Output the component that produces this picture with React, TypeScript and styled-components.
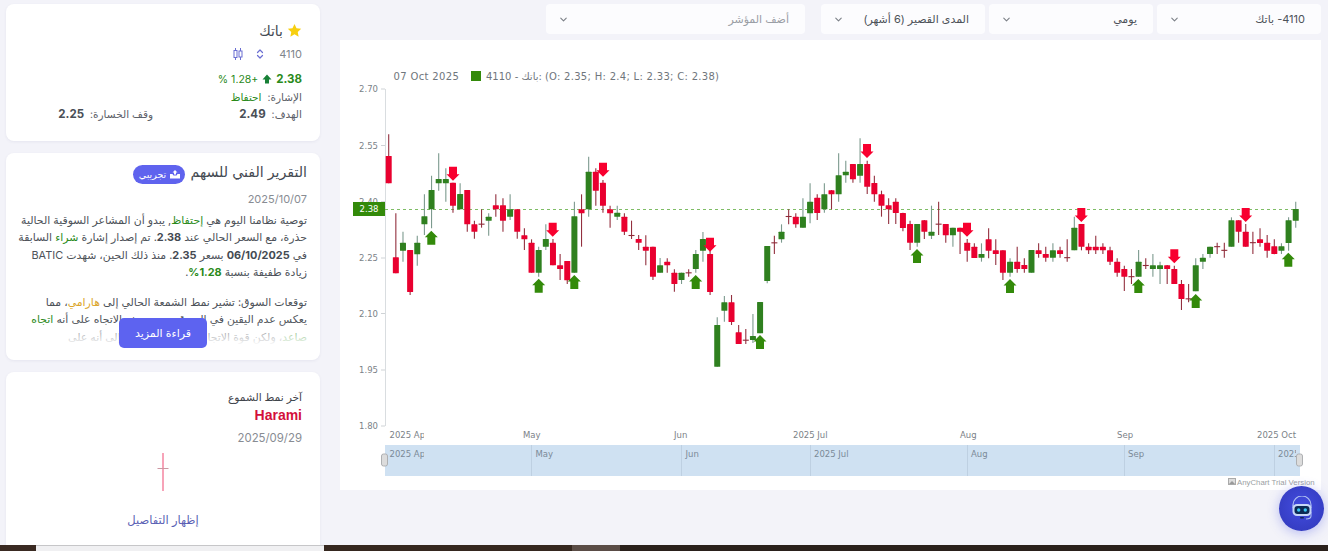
import React from 'react';
import styled, { createGlobalStyle } from 'styled-components';
import { ChevronDown, ChevronsUpDown } from 'lucide-react';

const FONT = `"Inter", "DejaVu Sans", "Noto Sans", sans-serif`;
const CHART_FONT = `"DejaVu Sans", "Liberation Sans", sans-serif`;

const Global = createGlobalStyle`
  html, body { margin: 0; padding: 0; background: #f3f3f9; overflow: hidden; }
  body { font-family: ${FONT}; }
`;

const Page = styled.div`
  position: relative;
  width: 1328px;
  height: 551px;
  display: flex;
  flex-direction: column;
  overflow: hidden;
  background: #f3f3f9;
`;
const Body = styled.div`
  flex: 1;
  min-height: 0;
  display: flex;
  gap: 20px;
  padding: 4px 7px 0 6px;
  overflow: hidden;
`;
const Sidebar = styled.aside`
  width: 314px;
  flex: none;
  display: flex;
  flex-direction: column;
  gap: 12px;
  direction: rtl;
`;
const Card = styled.section`
  position: relative;
  background: #fff;
  border-radius: 8px;
  box-shadow: 0 1px 3px rgba(60, 60, 110, 0.07);
  flex: none;
`;
const StockCard = styled(Card)`
  height: 137px;
  padding: 18px 18px 0;
  box-sizing: border-box;
`;
const Name = styled.div`
  display: flex;
  align-items: center;
  gap: 4px;
  height: 16px;
  font-size: 14px;
  color: #444a52;
`;
const CodeRow = styled.div`
  display: flex;
  align-items: center;
  margin-top: 9px;
  height: 14px;
  font-size: 11px;
  color: #80858c;
`;
const IconGap = styled.span<{ $w: number }>`
  display: inline-flex;
  margin-inline-start: ${p => p.$w}px;
  color: #6a6ed2;
`;
const PriceRow = styled.div`
  display: flex;
  align-items: center;
  gap: 4px;
  margin-top: 11px;
  margin-bottom: 4px;
  height: 14px;
  font-size: 11.5px;
  color: #2a8a1a;
`;
const Percent = styled.span`
  font-size: 10.5px;
  margin-inline-start: -2px;
`;
const Strong = styled.b`
  font-weight: 700;
`;
const InfoRow = styled.div`
  display: flex;
  align-items: center;
  margin-top: 3px;
  height: 14px;
  font-size: 10.5px;
  color: #5b6068;
`;
const InfoCol = styled.div`
  width: 149px;
  flex: none;
  display: flex;
  align-items: center;
  gap: 6px;
`;
const Value = styled.b`
  color: #4a4f57;
  font-weight: 700;
  font-size: 11.5px;
`;
const Good = styled.span`
  color: #2a8a1a;
`;
const Warn = styled.span`
  color: #dba52a;
`;
const Dark = styled.b`
  color: #444a52;
  font-weight: 700;
`;
const ReportCard = styled(Card)`
  height: 207px;
  padding: 11px 13px 0 12px;
  box-sizing: border-box;
  overflow: hidden;
`;
const ReportHead = styled.div`
  display: flex;
  align-items: center;
  gap: 5px;
  height: 20px;
`;
const ReportTitle = styled.div`
  font-size: 14.2px;
  color: #444a52;
  padding-bottom: 5px;
`;
const Badge = styled.span`
  display: inline-flex;
  align-items: center;
  justify-content: center;
  gap: 4px;
  width: 52px;
  height: 19px;
  border-radius: 10px;
  background: #5f63ee;
  color: #fff;
  font-size: 9.5px;
`;
const DateText = styled.div`
  font-size: 11px;
  color: #888c93;
  margin-top: 8px;
  height: 14px;
  line-height: 14px;
`;
const Article = styled.div`
  position: relative;
  margin-top: 6px;
  height: 133px;
  overflow: hidden;
  font-size: 10.9px;
  line-height: 17.3px;
  white-space: nowrap;
  color: #4d5259;
`;
const Para = styled.p`
  margin: 0 0 13px;
`;
const Fade = styled.div`
  position: absolute;
  left: 0;
  right: 0;
  bottom: 0;
  height: 24px;
  background: linear-gradient(to bottom, rgba(255, 255, 255, 0), rgba(255, 255, 255, 0.58) 55%, #fff);
`;
const ReadMore = styled.button`
  position: absolute;
  left: 50%;
  bottom: 12px;
  transform: translateX(-50%);
  width: 88px;
  height: 30px;
  border: none;
  border-radius: 5px;
  background: #5d63f0;
  color: #fff;
  font: 11px ${FONT};
`;
const PatternCard = styled(Card)`
  flex: 1;
  border-radius: 8px 8px 0 0;
  padding: 18px 18px 0;
  box-sizing: border-box;
  display: flex;
  flex-direction: column;
`;
const PatternLabel = styled.div`
  font-size: 10.6px;
  color: #3f444b;
  height: 16px;
  line-height: 16px;
`;
const PatternName = styled.div`
  font-size: 14px;
  font-weight: 700;
  color: #d30f3b;
  line-height: 18px;
  font-family: "Liberation Sans", sans-serif;
`;
const PatternDate = styled(DateText)`
  margin-top: 7px;
  font-size: 11.4px;
`;
const PatternPic = styled.div`
  display: flex;
  justify-content: center;
  margin-top: 8px;
`;
const ShowDetails = styled.div`
  text-align: center;
  font-size: 11.5px;
  color: #5a5fb4;
  margin-top: 22px;
`;
const Main = styled.main`
  width: 981px;
  flex: none;
  display: flex;
  flex-direction: column;
  gap: 6px;
`;
const Toolbar = styled.div`
  display: flex;
  direction: rtl;
  gap: 4px;
  height: 30px;
`;
const Select = styled.div<{ $w: number; $gap?: number }>`
  width: ${p => p.$w}px;
  margin-inline-start: ${p => p.$gap ?? 0}px;
  height: 30px;
  box-sizing: border-box;
  display: flex;
  align-items: center;
  justify-content: space-between;
  padding: 0 16px 0 12px;
  background: #fcfcfe;
  border-radius: 4px;
  font-size: 11px;
  color: #4d5259;
  svg { color: #7c8087; flex: none; }
`;
const Placeholder = styled.span`
  color: #9a9ea5;
`;
const ChartPanel = styled.div`
  width: 981px;
  height: 450px;
  background: #fff;
`;
const Bot = styled.div`
  position: absolute;
  left: 1279px;
  top: 486px;
  width: 45px;
  height: 45px;
  border-radius: 50%;
  background: radial-gradient(circle at 50% 45%, #434ce0, #3038b8);
  box-shadow: 0 2px 12px rgba(70, 80, 230, 0.35);
  display: flex;
  align-items: center;
  justify-content: center;
`;
const Strip = styled.div`
  height: 6px;
  flex: none;
  display: flex;
  background: #2a201b;
`;
const StripPart = styled.div<{ $w: number; $c: string; $line?: boolean }>`
  width: ${p => p.$w}px;
  background: ${p => p.$c};
  box-sizing: border-box;
  ${p => (p.$line ? 'border-top: 1px solid #c6c6c8;' : '')}
`;

const X0 = 388.7;
const STEP = 7.142;
type C = [number, number, number, number];

const y6 = (b: number, rows: C[]) => rows.map(r => r.map(v => b + v / 3) as C);

const seriesA: C[] = y6(120, [
  [43,108,190,190],[280,412,460,460],[335,368,392,425],[390,390,516,525],[347,368,403,437],
  [223,289,313,345],[167,210,268,325],[100,177,190,212],[145,177,190,245],[188,188,257,278],
  [190,222,268,268],[210,210,313,335],[302,313,335,356],[268,311,314,323],[280,290,302,347],
  [223,256,268,290],[235,256,302,335],[223,268,290,300],[268,268,335,356],[325,346,358,390],
  [358,368,458,458],[380,390,458,470],[313,357,380,390],[357,368,436,436],[402,436,447,480],
  [423,423,481,492],[245,289,458,458],[223,268,280,380],[110,155,268,290],[145,155,212,257],
  [180,188,257,278],[257,268,280,323],[257,278,290,300],[280,290,335,345],[302,345,348,357],
  [345,357,368,390],[346,380,392,436],[380,380,470,480],[414,436,458,458],[415,425,436,458],
  [448,458,492,515],[458,458,480,492],[448,457,460,470],[390,402,447,458],[336,357,392,425],
  [390,402,516,525],
]);
const seriesB: C[] = [
  [317.3,325,366.7,366.7],[296,302.3,310.7,321.7],[295,302.3,322,325],[325,332.3,344,344],
  [329,339.7,340.7,344],[314,336,340,343],[302,302,333.3,333.3],
];
const seriesC: C[] = y6(120, [
  [378,378,483,490],[347,367,370,402],[313,335,358,368],[268,288,291,313],[280,290,313,323],
  [235,290,323,323],[190,245,280,310],[223,233,279,300],[190,223,268,278],[210,211,223,268],
  [100,166,223,245],[122,155,166,188],[132,132,178,188],[55,132,167,188],[122,132,200,222],
  [167,189,223,245],[212,223,257,290],[235,256,268,312],[235,245,279,312],[278,279,324,334],
  [302,312,368,390],[312,312,368,380],[300,301,335,357],[257,335,347,357],[245,311,314,345],
  [312,312,346,368],[323,323,346,380],[323,323,335,402],[357,368,392,425],[370,380,414,414],
]);
const seriesD: C[] = y6(180, [
  [190,222,233,245],[145,178,212,235],[178,211,222,255],[211,211,278,300],[235,245,278,290],
  [200,245,267,278],[235,255,267,278],[210,210,278,278],[190,211,222,233],[200,222,233,245],
  [190,211,233,245],[200,211,222,233],[178,232,234,245],[110,143,211,211],[132,132,200,211],
  [190,200,211,222],[167,200,211,222],[190,200,211,222],[200,211,245,255],[235,245,278,290],
  [257,267,290,333],[267,289,291,312],[210,245,290,290],[235,255,258,267],[222,256,267,290],
  [245,256,267,312],[255,256,267,312],[257,267,312,312],[300,312,357,390],[312,355,358,367],
  [235,256,334,334],[222,233,245,267],[200,200,222,233],[188,199,201,222],[188,210,212,233],
  [112,121,200,200],[121,121,155,188],[132,155,200,200],[155,187,189,222],[145,178,189,200],
  [165,188,212,233],[178,199,222,223],[190,199,212,222],[112,121,189,212],[65,87,122,143],
]);
const candles = [...seriesA, ...seriesB, ...seriesC, ...seriesD];
const greens = new Set([
  2,4,5,6,7,8,10,14,17,21,22,26,28,32,38,41,43,44,46,47,51,52,53,55,58,59,61,63,64,66,74,76,79,
  83,87,90,93,96,105,107,108,113,114,115,118,125,126,127,
]);

const upArrows: [number, number][] = [
  [431.3,230.7],[538.7,278.7],[574.3,275],[695.7,275],[760,335],[917,249],[1010,279],[1138.3,279],[1195.7,294],[1288.3,252.7],
];
const downArrows: [number, number][] = [
  [453,166.7],[552.7,222.7],[603,162.7],[710,237.7],[867,144],[967,222.7],[1081.3,208],[1174.3,249.3],[1245.7,208],
];
const yLabels: [string, number][] = [['2.70',89],['2.55',145.5],['2.40',201.7],['2.25',258],['2.10',313.5],['1.95',370],['1.80',426]];

const CandleChart = () => (
  <svg width="981" height="450" viewBox="340 40 981 450" fontFamily={CHART_FONT}>
    <defs>
      <clipPath id="firstLabel"><rect x="385" y="425" width="39" height="40" /></clipPath>
      <clipPath id="lastLabel"><rect x="1274" y="445" width="22" height="20" /></clipPath>
    </defs>
    <text x="393.5" y="80" fontSize="10" letterSpacing="0.35" fill="#6f767c">07 Oct 2025</text>
    <rect x="471" y="71" width="10" height="10" fill="#338a0a" />
    <text x="486" y="80" fontSize="10" letterSpacing="0.3" fill="#6f767c" direction="ltr">4110 - باتك: (O: 2.35; H: 2.4; L: 2.33; C: 2.38)</text>

    <line x1="385.5" y1="89" x2="385.5" y2="426" stroke="#d9dde0" strokeWidth="1" />
    {yLabels.map(([t, y]) => (
      <g key={t}>
        <line x1="381" x2="385" y1={y} y2={y} stroke="#cfd3d6" />
        <text x="378" y={y + 3} textAnchor="end" fontSize="8.5" fill="#7b8288">{t}</text>
      </g>
    ))}
    <line x1="385" x2="1298" y1="209.5" y2="209.5" stroke="#7fbd66" strokeDasharray="3 3" />
    <rect x="353" y="202" width="32" height="14" fill="#338a0a" />
    <text x="369" y="212" textAnchor="middle" fontSize="8.5" fill="#fff">2.38</text>

    {candles.map((c, i) => {
      const x = X0 + STEP * i;
      const g = greens.has(i);
      const body = c[2] - c[1];
      const wick = g ? '#7c9a8e' : '#93303f';
      return (
        <g key={i}>
          <line x1={x} x2={x} y1={c[0]} y2={c[3]} stroke={wick} strokeWidth="1.1" />
          {body < 2 ? (
            <line x1={x - 3} x2={x + 3} y1={c[1] + body / 2} y2={c[1] + body / 2} stroke="#8e2a38" strokeWidth="1.1" />
          ) : (
            <rect x={x - 3} y={c[1]} width="6" height={body} fill={g ? '#2f801f' : '#e9002f'} rx="0.5" />
          )}
        </g>
      );
    })}
    {upArrows.map(([x, y]) => (
      <path key={x} d={`M${x} ${y}l6.5 6.5h-2.5v7.5h-8v-7.5h-2.5z`} fill="#338a0a" />
    ))}
    {downArrows.map(([x, y]) => (
      <path key={x} d={`M${x - 4} ${y}h8v7.5h2.5l-6.5 6.5l-6.5-6.5h2.5z`} fill="#f8002f" />
    ))}

    <g fontSize="8.5" fill="#7b8288">
      <text x="389.5" y="438" clipPath="url(#firstLabel)">2025 Apr</text>
      <text x="523" y="438">May</text>
      <text x="674" y="438">Jun</text>
      <text x="793" y="438">2025 Jul</text>
      <text x="960" y="438">Aug</text>
      <text x="1117" y="438">Sep</text>
      <text x="1257" y="438">2025 Oct</text>
    </g>
    <rect x="385" y="445" width="915" height="31" fill="#cfe1f2" />
    {[531.5, 681.5, 810.5, 967.5, 1124.5, 1274.5].map(x => (
      <line key={x} x1={x} x2={x} y1="445" y2="476" stroke="#bed0e2" />
    ))}
    <g fontSize="8.5" fill="#7b8a98">
      <text x="389.5" y="457" clipPath="url(#firstLabel)">2025 Apr</text>
      <text x="535.5" y="457">May</text>
      <text x="685.5" y="457">Jun</text>
      <text x="814" y="457">2025 Jul</text>
      <text x="971" y="457">Aug</text>
      <text x="1128" y="457">Sep</text>
      <text x="1278" y="457" clipPath="url(#lastLabel)">2025 Oct</text>
    </g>
    <rect x="381.5" y="454" width="6" height="12" rx="2" fill="#dcdcdc" stroke="#aeb0b2" />
    <rect x="1296.5" y="454" width="6" height="12" rx="2" fill="#dcdcdc" stroke="#aeb0b2" />
    <rect x="1228.5" y="478.5" width="7" height="6" fill="#ddd" stroke="#aaa" />
    <path d="M1229 484l3-3 3 3z" fill="#999" />
    <text x="1237" y="484.5" fontSize="7.8" fill="#9b9fa3" fontFamily="Liberation Sans, sans-serif">AnyChart Trial Version</text>
  </svg>
);

const Star = () => (
  <svg width="15" height="15" viewBox="0 0 24 24">
    <path d="M12 1.5l3.2 6.9 7.5.9-5.5 5.2 1.4 7.5L12 18l-6.6 3.9 1.4-7.5-5.5-5.2 7.5-.9z" fill="#f7cf10" />
  </svg>
);
const CandleGlyph = () => (
  <svg width="10" height="12" viewBox="0 0 10 12" stroke="currentColor" fill="none" strokeWidth="1">
    <path d="M2.5 0v2.5M2.5 9.5V12M7.5 0v3M7.5 9v3" />
    <rect x="1" y="2.5" width="3" height="7" />
    <rect x="6" y="3" width="3" height="6" />
  </svg>
);
const UpArrow = () => (
  <svg width="10" height="10" viewBox="0 0 10 10">
    <path d="M5 0.5l4.5 5H7v4H3v-4H.5z" fill="#178036" />
  </svg>
);
const TrayIcon = () => (
  <svg width="10" height="9" viewBox="0 0 10 9" fill="#fff">
    <path d="M0 4h2.5l1 1.5h3l1-1.5H10v4.5H0z" />
    <path d="M5 0l2.5 2.5H6v2H4v-2H2.5z" />
  </svg>
);
const PatternCandle = () => (
  <svg width="14" height="38" viewBox="0 0 14 38">
    <line x1="7" x2="7" y1="0" y2="38" stroke="#f7a3b8" strokeWidth="2" />
    <line x1="1.5" x2="12.5" y1="15.5" y2="15.5" stroke="#cc97a2" strokeWidth="1" />
  </svg>
);
const RobotIcon = () => (
  <svg width="24" height="26" viewBox="0 0 24 26" fill="none">
    <path d="M3 12V9a9 9 0 0 1 18 0v3" stroke="#aebff0" strokeWidth="1.2" />
    <path d="M21 16v4c0 2-2 3-5 3" stroke="#aebff0" strokeWidth="1.1" />
    <rect x="2.5" y="8" width="19" height="12" rx="4.5" fill="#c6d6f7" />
    <rect x="4.5" y="10" width="15" height="8" rx="3" fill="#0b2a55" />
    <circle cx="8.7" cy="14" r="1.7" fill="#38c6f4" />
    <circle cx="15.3" cy="14" r="1.7" fill="#38c6f4" />
    <rect x="10" y="21" width="4" height="1.6" rx="0.8" fill="#10265a" />
  </svg>
);

const SelectBox = ({ w, gap, children }: { w: number; gap?: number; children: React.ReactNode }) => (
  <Select $w={w} $gap={gap}>
    <span>{children}</span>
    <ChevronDown size={11} strokeWidth={2.4} />
  </Select>
);

export default function App() {
  return (
    <Page>
      <Global />
      <Body>
        <Sidebar>
          <StockCard>
            <Name><Star /> باتك</Name>
            <CodeRow>
              <span>4110</span>
              <IconGap $w={13}><ChevronsUpDown size={12} strokeWidth={2.4} /></IconGap>
              <IconGap $w={11}><CandleGlyph /></IconGap>
            </CodeRow>
            <PriceRow>
              <Strong>2.38</Strong>
              <UpArrow />
              <Percent dir="ltr">% 1.28+</Percent>
            </PriceRow>
            <InfoRow>
              <InfoCol>الإشارة: <Good>احتفاظ</Good></InfoCol>
            </InfoRow>
            <InfoRow>
              <InfoCol>الهدف: <Value>2.49</Value></InfoCol>
              <InfoCol>وقف الخسارة: <Value>2.25</Value></InfoCol>
            </InfoRow>
          </StockCard>

          <ReportCard>
            <ReportHead>
              <ReportTitle>التقرير الفني للسهم</ReportTitle>
              <Badge><TrayIcon /> تجريبي</Badge>
            </ReportHead>
            <DateText>2025/10/07</DateText>
            <Article>
              <Para>
                توصية نظامنا اليوم هي <Good>إحتفاظ</Good>, يبدو أن المشاعر السوقية الحالية<br />
                حذرة، مع السعر الحالي عند <Dark>2.38</Dark>. تم إصدار إشارة <Good>شراء</Good> السابقة<br />
                في <Dark>06/10/2025</Dark> بسعر <Dark>2.35</Dark>. منذ ذلك الحين، شهدت BATIC<br />
                زيادة طفيفة بنسبة <Good><b>1.28%</b></Good>.
              </Para>
              <Para>
                توقعات السوق: تشير نمط الشمعة الحالي إلى <Warn>هارامي</Warn>، مما<br />
                يعكس عدم اليقين في السوق. يتم تعريف الاتجاه على أنه <Good>اتجاه</Good><br />
                <Good>صاعد</Good>، ولكن قوة الاتجاه ضعيفة. هذا يشير إلى أنه على
              </Para>
              <Fade />
            </Article>
            <ReadMore>قراءة المزيد</ReadMore>
          </ReportCard>

          <PatternCard>
            <PatternLabel>آخر نمط الشموع</PatternLabel>
            <PatternName>Harami</PatternName>
            <PatternDate>2025/09/29</PatternDate>
            <PatternPic><PatternCandle /></PatternPic>
            <ShowDetails>إظهار التفاصيل</ShowDetails>
          </PatternCard>
        </Sidebar>

        <Main>
          <Toolbar>
            <SelectBox w={164}>4110- باتك</SelectBox>
            <SelectBox w={164}>يومي</SelectBox>
            <SelectBox w={164}>المدى القصير (6 أشهر)</SelectBox>
            <SelectBox w={259} gap={12}><Placeholder>أضف المؤشر</Placeholder></SelectBox>
          </Toolbar>
          <ChartPanel><CandleChart /></ChartPanel>
        </Main>
      </Body>
      <Strip>
        <StripPart $w={36} $c="#3a2a22" />
        <StripPart $w={288} $c="#f0f0f2" $line />
        <StripPart $w={248} $c="#35271f" />
        <StripPart $w={48} $c="#5a4c46" />
      </Strip>
      <Bot><RobotIcon /></Bot>
    </Page>
  );
}
